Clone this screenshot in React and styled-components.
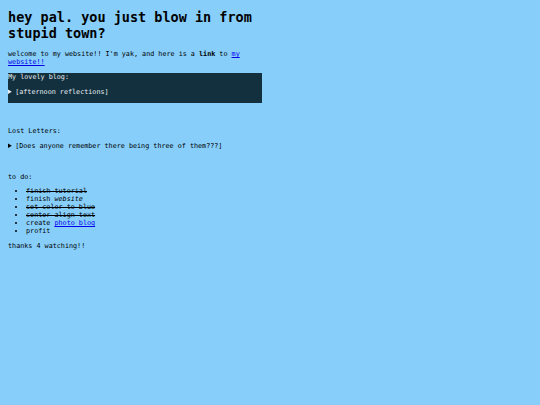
import React from "react";
import styled, { createGlobalStyle } from "styled-components";

const Global = createGlobalStyle`
  html, body { margin: 0; padding: 0; }
  body {
    background: #87cefa;
    color: #000;
    font-family: "DejaVu Sans Mono", "Liberation Mono", monospace;
    font-size: 6.75px;
    line-height: 8px;
  }
`;

const Page = styled.div`
  width: 253.5px;
  padding: 9px 8px 8px 8px;
`;

const Title = styled.h1`
  font-size: 13.5px;
  line-height: 16px;
  font-weight: bold;
  margin: 0 0 9px 0;
`;

const Para = styled.p`
  margin: 0 0 7px 0;
`;

const Link = styled.a`
  color: #0000ee;
  text-decoration: underline;
`;

const Box = styled.div`
  background: ${(p) => (p.$dark ? "#13303f" : "transparent")};
  color: ${(p) => (p.$dark ? "#e8eef2" : "#000")};
  margin-top: ${(p) => p.$top || 0}px;
  padding-bottom: 7px;
`;

const Label = styled.div`
  margin-bottom: 7px;
`;

const Summary = styled.summary`
  cursor: pointer;
`;

const TodoHead = styled.div`
  margin-top: 16px;
  margin-bottom: 6px;
`;

const List = styled.ul`
  margin: 0 0 7px 0;
  padding-left: 18px;
  list-style: disc;
`;

const Item = styled.li`
  text-decoration: ${(p) => (p.$done ? "line-through" : "none")};
`;

export default function App() {
  return (
    <>
      <Global />
      <Page>
        <Title>hey pal. you just blow in from stupid town?</Title>
        <Para>
          welcome to my website!! I'm yak, and here is a <b>link</b> to{" "}
          <Link href="#">my website!!</Link>
        </Para>
        <Box $dark>
          <Label>My lovely blog:</Label>
          <details>
            <Summary>[afternoon reflections]</Summary>
          </details>
        </Box>
        <Box $top={24}>
          <Label>Lost Letters:</Label>
          <details>
            <Summary>[Does anyone remember there being three of them???]</Summary>
          </details>
        </Box>
        <TodoHead>to do:</TodoHead>
        <List>
          <Item $done>finish tutorial</Item>
          <Item>
            finish <i>website</i>
          </Item>
          <Item $done>set color to blue</Item>
          <Item $done>center align text</Item>
          <Item>
            create <Link href="#">photo blog</Link>
          </Item>
          <Item>profit</Item>
        </List>
        <div>thanks 4 watching!!</div>
      </Page>
    </>
  );
}
